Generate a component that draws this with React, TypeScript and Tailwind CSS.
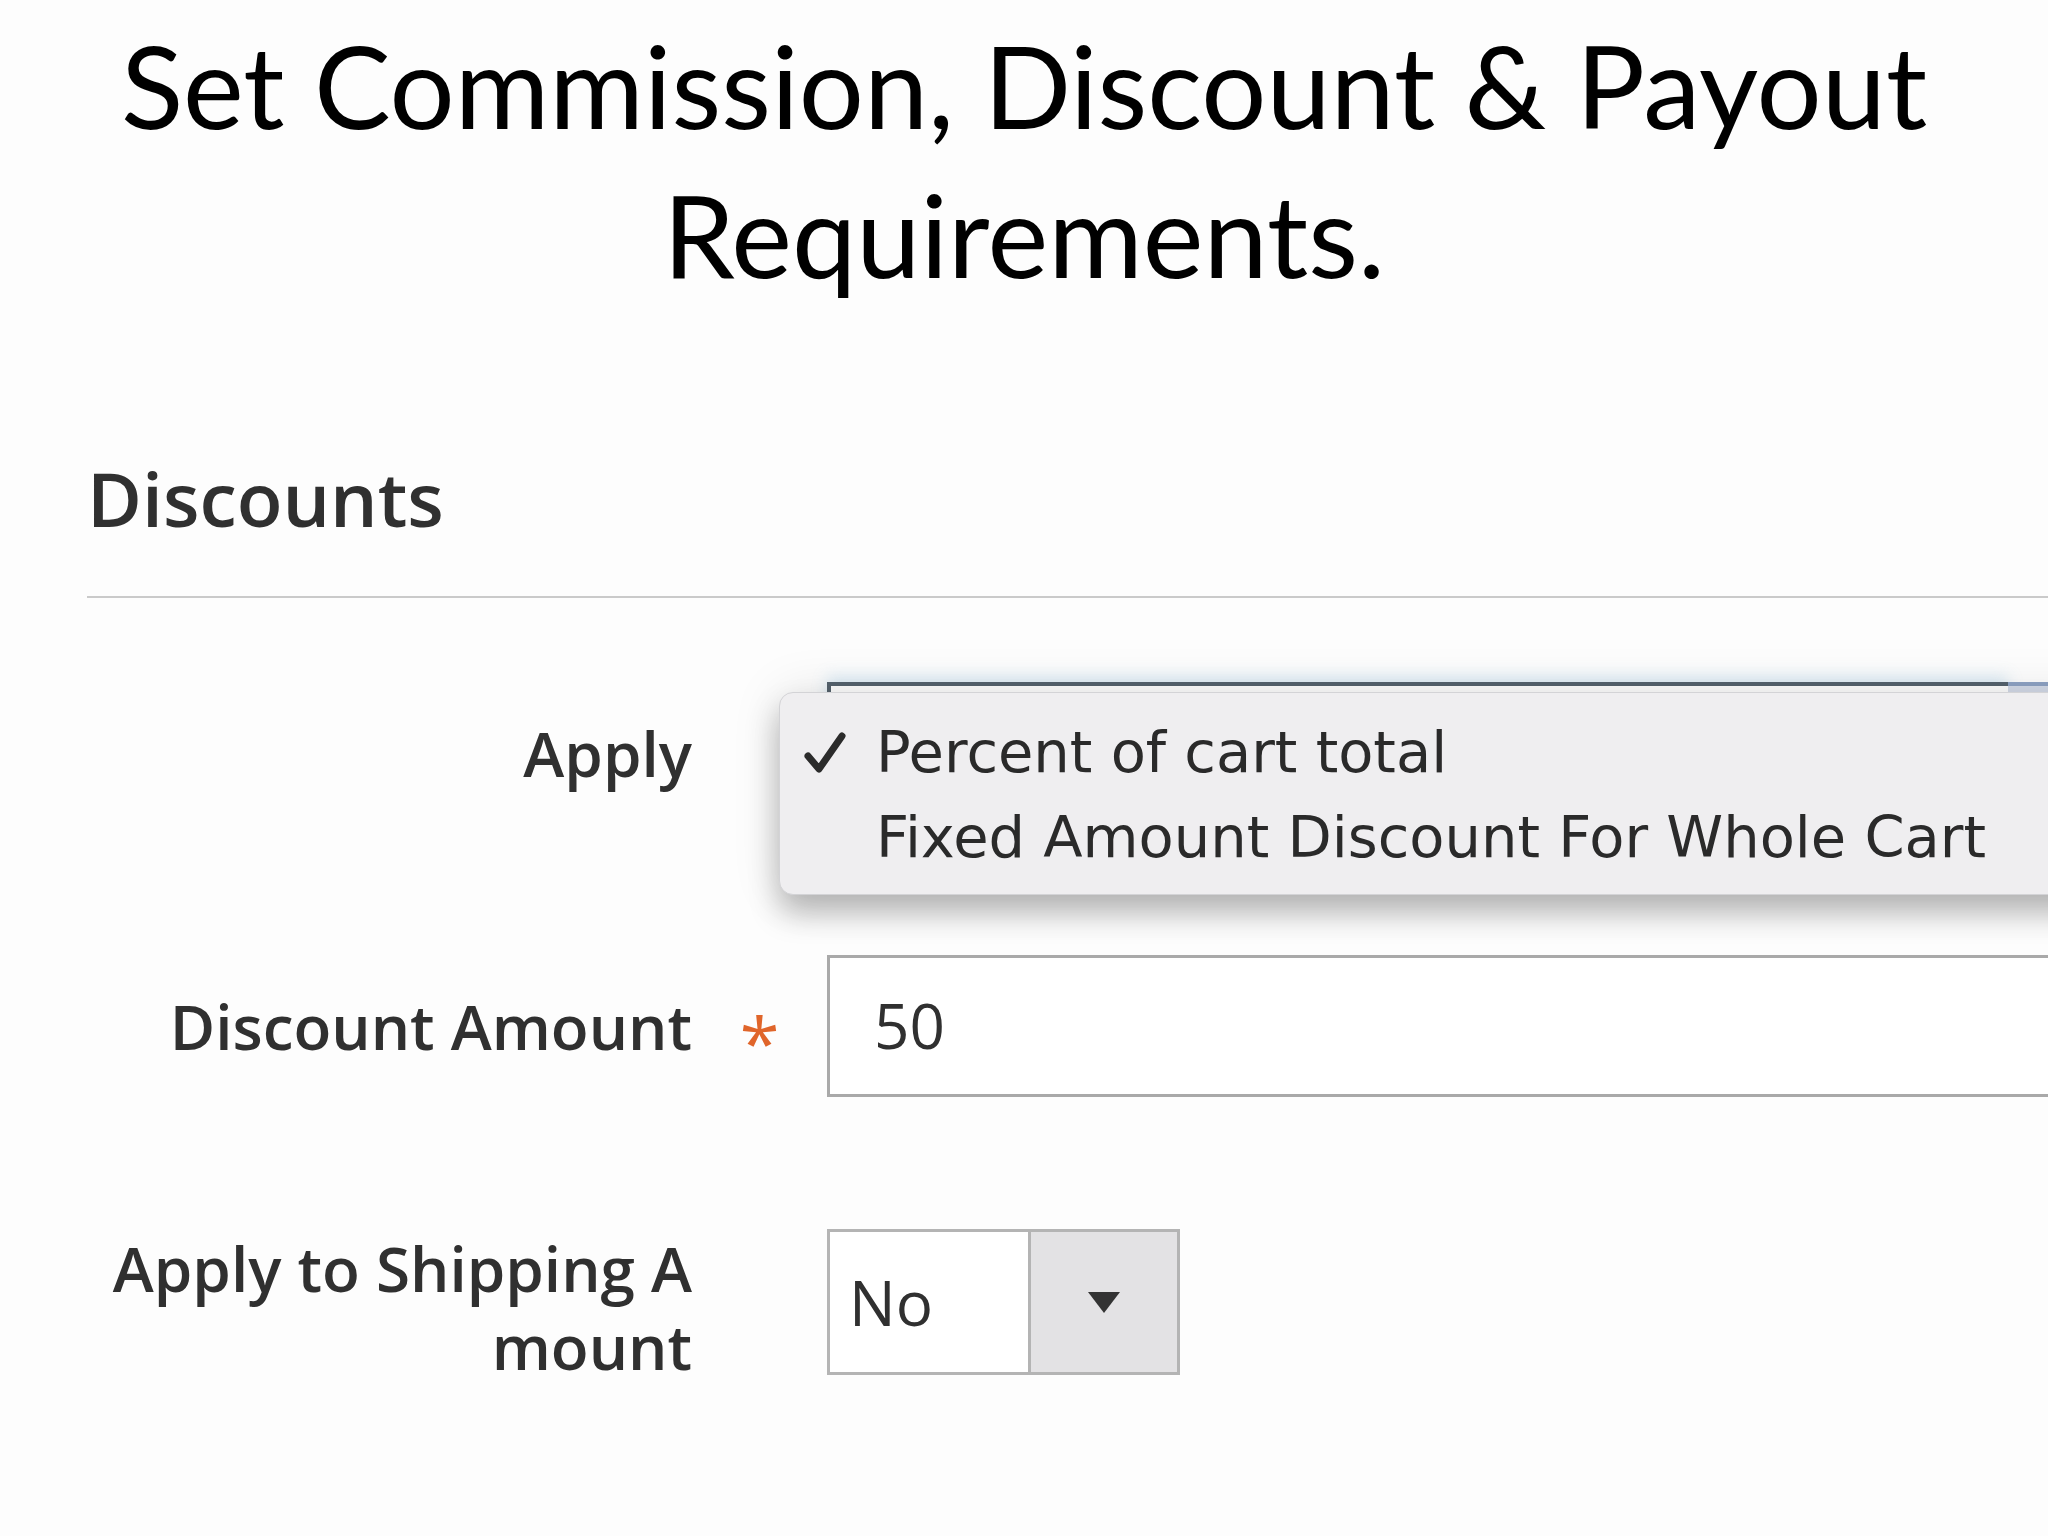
import React from "react";

function CheckMark() {
  return (
    <svg width="42" height="42" viewBox="0 0 42 42" className="shrink-0">
      <path d="M4 24 L15 37 L38 4" fill="none" stroke="#2b2b2b" strokeWidth="7" strokeLinecap="round" strokeLinejoin="round" />
    </svg>
  );
}

function ApplyMenu() {
  return (
    <div className="absolute left-[-48px] top-[10px] w-[1320px] h-[203px] rounded-[14px] border border-[#d3d3d6] bg-[#efeef0] shadow-[0_18px_30px_rgba(0,0,0,0.26),0_0_50px_rgba(0,0,0,0.10)] pt-[17px] font-['DejaVu_Sans',sans-serif] text-[57.5px] leading-[85px] text-[#2a2a2a]">
      <div className="flex items-center">
        <div className="w-[96px] flex justify-end pr-[30px]">
          <CheckMark />
        </div>
        <span>Percent of cart total</span>
      </div>
      <div className="pl-[96px]">Fixed Amount Discount For Whole Cart</div>
    </div>
  );
}

export default function App() {
  return (
    <div className="w-[2048px] h-[1536px] overflow-hidden bg-[#fdfdfd]">
      <h1 className="pt-[10px] text-center font-['Lato',sans-serif] text-[115px] leading-[149px] font-normal text-black">
        Set Commission, Discount &amp; Payout
        <br />
        Requirements.
      </h1>

      <div className="pl-[87px] font-['Open_Sans',sans-serif] text-[#303030]">
        <div className="mt-[151px] text-[75px] leading-[78px] font-semibold">Discounts</div>
        <div className="mt-[59px] h-[2px] bg-[#cacaca]" />

        <div className="mt-[84px] flex flex-col">
          {/* Apply */}
          <div className="flex h-[142px]">
            <div className="w-[605px] text-right text-[62px] leading-[142px] font-semibold">Apply</div>
            <div className="w-[135px]" />
            <div className="relative flex-1 flex">
              <div className="flex-1 border-t-[4px] border-l-[4px] border-[#56636e] bg-white shadow-[0_-6px_14px_rgba(120,180,220,0.25)]" />
              <div className="w-[40px] border-t-[4px] border-[#8fa3c4] bg-[#d5dcea]" />
              <ApplyMenu />
            </div>
          </div>

          {/* Discount Amount */}
          <div className="mt-[131px] flex h-[142px]">
            <div className="w-[605px] text-right text-[62px] leading-[142px] font-semibold">Discount Amount</div>
            <div className="w-[135px] flex justify-center">
              <span className="pt-[50px] text-[72px] leading-[72px] font-normal text-[#e0652a]">*</span>
            </div>
            <div className="flex-1 border-[3px] border-r-0 border-[#a9a9a9] bg-white pl-[44px] text-[62px] leading-[134px] font-normal">
              50
            </div>
          </div>

          {/* Apply to Shipping Amount */}
          <div className="mt-[132px] flex h-[146px]">
            <div className="w-[605px] text-right text-[62px] leading-[78px] font-semibold">
              Apply to Shipping A
              <br />
              mount
            </div>
            <div className="w-[135px]" />
            <div className="flex w-[353px] border-[3px] border-[#b4b4b4]">
              <div className="w-[198px] bg-white pl-[19px] text-[62px] leading-[140px] font-normal">No</div>
              <div className="flex-1 flex items-center justify-center border-l-[3px] border-[#b4b4b4] bg-[#e3e2e4]">
                <svg width="36" height="26" viewBox="0 0 36 26">
                  <path d="M2 3 L34 3 L18 24 Z" fill="#333" />
                </svg>
              </div>
            </div>
          </div>
        </div>
      </div>
    </div>
  );
}
